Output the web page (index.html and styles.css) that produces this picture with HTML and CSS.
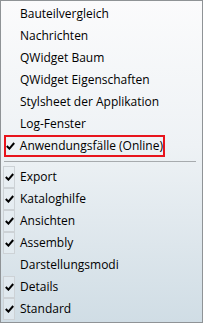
FILE: index.html
```html
<!DOCTYPE html>
<html>
<head>
<meta charset="utf-8">
<link rel="stylesheet" href="styles.css">
</head>
<body>
<div class="menu">
  <div class="item"><span class="gutter"></span><span class="label">Bauteilvergleich</span></div>
  <div class="item"><span class="gutter"></span><span class="label">Nachrichten</span></div>
  <div class="item"><span class="gutter"></span><span class="label">QWidget Baum</span></div>
  <div class="item"><span class="gutter"></span><span class="label">QWidget Eigenschaften</span></div>
  <div class="item"><span class="gutter"></span><span class="label">Stylsheet der Applikation</span></div>
  <div class="item"><span class="gutter"></span><span class="label">Log-Fenster</span></div>
  <div class="item highlight"><span class="gutter plain"><svg class="check" width="9" height="8" viewBox="0 0 9 8"><path d="M0.8 4 L3.4 6.6 L8.2 1" fill="none" stroke="#000" stroke-width="2"/></svg></span><span class="label">Anwendungsfälle (Online)</span></div>
  <div class="sep"></div>
  <div class="item"><span class="gutter box"><svg class="check" width="9" height="8" viewBox="0 0 9 8"><path d="M0.8 4 L3.4 6.6 L8.2 1" fill="none" stroke="#000" stroke-width="2"/></svg></span><span class="label">Export</span></div>
  <div class="item"><span class="gutter box"><svg class="check" width="9" height="8" viewBox="0 0 9 8"><path d="M0.8 4 L3.4 6.6 L8.2 1" fill="none" stroke="#000" stroke-width="2"/></svg></span><span class="label">Kataloghilfe</span></div>
  <div class="item"><span class="gutter box"><svg class="check" width="9" height="8" viewBox="0 0 9 8"><path d="M0.8 4 L3.4 6.6 L8.2 1" fill="none" stroke="#000" stroke-width="2"/></svg></span><span class="label">Ansichten</span></div>
  <div class="item"><span class="gutter box"><svg class="check" width="9" height="8" viewBox="0 0 9 8"><path d="M0.8 4 L3.4 6.6 L8.2 1" fill="none" stroke="#000" stroke-width="2"/></svg></span><span class="label">Assembly</span></div>
  <div class="item"><span class="gutter"></span><span class="label">Darstellungsmodi</span></div>
  <div class="item"><span class="gutter box"><svg class="check" width="9" height="8" viewBox="0 0 9 8"><path d="M0.8 4 L3.4 6.6 L8.2 1" fill="none" stroke="#000" stroke-width="2"/></svg></span><span class="label">Details</span></div>
  <div class="item"><span class="gutter box"><svg class="check" width="9" height="8" viewBox="0 0 9 8"><path d="M0.8 4 L3.4 6.6 L8.2 1" fill="none" stroke="#000" stroke-width="2"/></svg></span><span class="label">Standard</span></div>
</div>
</body>
</html>
```
FILE: styles.css
```css
html, body {
  margin: 0;
  padding: 0;
}
body {
  width: 203px;
  height: 323px;
  overflow: hidden;
}
.menu {
  box-sizing: border-box;
  width: 203px;
  height: 323px;
  border: 1px solid #8f9396;
  background: linear-gradient(to bottom, #fbfbfc 0%, #eef2f5 45%, #d0dde5 100%);
  padding: 2px 2px 0 2px;
  font-family: "Open Sans", "Noto Sans", sans-serif;
  font-size: 12px;
  color: #000;
}
.item {
  display: flex;
  align-items: center;
  height: 22px;
}
.gutter {
  box-sizing: border-box;
  width: 12px;
  height: 22px;
  margin-right: 5px;
  display: flex;
  align-items: center;
  justify-content: center;
}
.gutter.box {
  border: 1px solid #cdd2d6;
  background: rgba(232, 238, 243, 0.6);
}
.label {
  white-space: nowrap;
  line-height: 22px;
}
.highlight {
  box-sizing: border-box;
  width: 161px;
  border: 2px solid #e8141c;
  margin-left: 1px;
}
.highlight .gutter {
  width: 10px;
  margin-right: 4px;
}
.sep {
  height: 1px;
  background: #a7abae;
  margin: 4px 4px 4px 1px;
}
```
